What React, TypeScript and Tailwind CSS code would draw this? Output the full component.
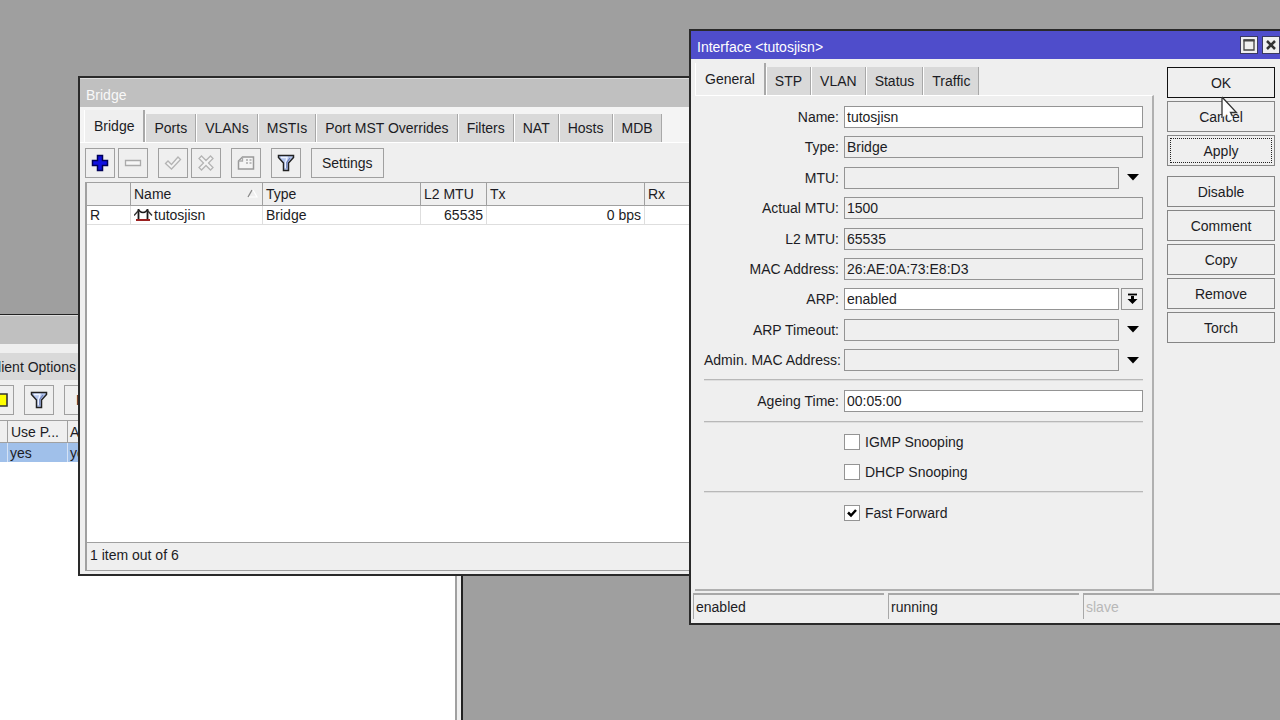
import { useState } from "react";
import type { ReactNode } from "react";

function Tab({ label, active = false }: { label: string; active?: boolean }) {
  return (
    <button
      type="button"
      role="tab"
      aria-selected={active}
      className={
        active
          ? "h-8 shrink-0 border-r-2 border-[#a8a8a8] border-l border-l-white bg-[#efefef] px-[9px] whitespace-nowrap"
          : "h-7 shrink-0 border-r border-[#a8a8a8] border-l border-l-white bg-[#d9d9d9] px-2 whitespace-nowrap"
      }
    >
      {label}
    </button>
  );
}

function Tool({ label, children }: { label: string; children: ReactNode }) {
  return (
    <button
      type="button"
      aria-label={label}
      className="flex size-[30px] shrink-0 items-center justify-center border border-[#a0a0a0] bg-[#efefef]"
    >
      {children}
    </button>
  );
}

function Funnel() {
  return (
    <svg width="18" height="18" viewBox="0 0 18 18">
      <path d="M1.5 1.5h15v2l-5 5.5v7.5h-5V9l-5-5.5z" fill="#b4c6ee" stroke="#222" strokeWidth="1.500" />
      <path d="M4 3.500h6L8.500 9v5" fill="none" stroke="#eef3ff" strokeWidth="1.400" />
      <path d="M13 4l-3.200 4.500v6" fill="none" stroke="#6d7fb8" strokeWidth="1.200" />
    </svg>
  );
}

function BridgeIcon() {
  return (
    <svg width="20" height="14" viewBox="0 0 20 14" className="shrink-0">
      <path d="M4.500 1v10M13.500 1v10" stroke="#1a1a1a" strokeWidth="1.800" />
      <path d="M4.500 2q4.500 5 9 0" fill="none" stroke="#1a1a1a" strokeWidth="1.500" />
      <path d="M0 7.500L4.500 2.500M13.500 2.500l4.500 5" fill="none" stroke="#333" strokeWidth="1.400" />
      <path d="M2 12h14" stroke="#9a2020" strokeWidth="2" />
    </svg>
  );
}

function DropArrow() {
  return (
    <svg width="12" height="7" viewBox="0 0 12 7">
      <path d="M0 0h12L6 6.500z" fill="#000" />
    </svg>
  );
}

function Field({
  id,
  label,
  value = "",
  editable = false,
  expandable = false,
}: {
  id: string;
  label: string;
  value?: string;
  editable?: boolean;
  expandable?: boolean;
}) {
  return (
    <div className="flex items-center">
      <label htmlFor={id} className="mr-[5px] w-[135px] shrink-0 text-right whitespace-nowrap">
        {label}
      </label>
      <input
        id={id}
        defaultValue={value}
        readOnly={!editable}
        className={
          editable
            ? "h-[22px] min-w-0 flex-1 border border-[#949494] bg-white px-[2px] outline-none"
            : "h-[22px] min-w-0 flex-1 border border-[#949494] bg-[#efefef] px-[2px] outline-none"
        }
      />
      {expandable && (
        <button type="button" aria-label={`Expand ${label}`} className="flex w-6 shrink-0 justify-center pl-1">
          <DropArrow />
        </button>
      )}
    </div>
  );
}

function Check({ id, label, initial = false }: { id: string; label: string; initial?: boolean }) {
  const [on, setOn] = useState(initial);
  return (
    <div className="flex h-[22px] items-center pl-[140px]">
      <span className="relative flex size-4">
        <input
          id={id}
          type="checkbox"
          checked={on}
          onChange={(e) => setOn(e.target.checked)}
          className="size-4 appearance-none border border-[#949494] bg-white"
        />
        {on && (
          <svg className="pointer-events-none absolute inset-0" width="16" height="16" viewBox="0 0 16 16">
            <path d="M4 7.500l3 3L12 5" fill="none" stroke="#000" strokeWidth="2.500" />
          </svg>
        )}
      </span>
      <label htmlFor={id} className="pl-[5px]">
        {label}
      </label>
    </div>
  );
}

function Rule() {
  return <hr className="h-[2px] border-t border-b border-t-[#b8b8b8] border-b-[#dedede]" />;
}

function Action({ label, look = "plain" }: { label: string; look?: "plain" | "default" | "focused" }) {
  return (
    <button
      type="button"
      className={
        look === "default"
          ? "flex h-[31px] items-stretch border border-[#111] bg-[#efefef] p-[2px]"
          : "flex h-[31px] items-stretch border border-[#858585] bg-[#efefef] p-[2px]"
      }
    >
      <span
        className={
          look === "focused"
            ? "flex flex-1 items-center justify-center border border-dotted border-[#222]"
            : "flex flex-1 items-center justify-center"
        }
      >
        {label}
      </span>
    </button>
  );
}

function ClientWindow() {
  return (
    <section className="absolute top-[314px] -bottom-2 -left-5 flex w-[483px] flex-col border-t border-r-2 border-[#222] bg-[#efefef]">
      <header className="h-[29px] shrink-0 border-t border-[#ddd] bg-[#c0c0c0]" />
      <div className="flex h-9 shrink-0 items-end">
        <button type="button" role="tab" aria-selected="false" className="h-[27px] bg-[#d9d9d9] pr-2 pl-2 whitespace-nowrap">
          Client Options
        </button>
      </div>
      <div className="flex h-10 shrink-0 items-center gap-[10px] pl-1">
        <Tool label="Comment">
          <svg width="20" height="16" viewBox="0 0 20 16">
            <path d="M1 2h17v12H1z" fill="#ff0" stroke="#333" strokeWidth="1.600" />
          </svg>
        </Tool>
        <Tool label="Filter">
          <Funnel />
        </Tool>
        <button type="button" className="h-[30px] border border-[#a0a0a0] px-[11px]">
          Release
        </button>
      </div>
      <div className="mr-1 flex-1 border-t border-r-2 border-[#a0a0a0] bg-white">
        <table className="w-full table-fixed border-separate border-spacing-0 text-left">
          <thead>
            <tr className="h-[22px] bg-[#efefef]">
              <th className="w-7 border-r border-b border-[#a0a0a0]" aria-label="Interface" />
              <th className="w-[60px] border-r border-b border-[#a0a0a0] pl-[3px] font-normal">Use P...</th>
              <th className="border-b border-[#a0a0a0] pl-[2px] font-normal">Add Default Route</th>
            </tr>
          </thead>
          <tbody>
            <tr className="h-[19px] bg-[#a0c0ea] leading-[18px]">
              <td className="border-r border-[#d5e2f5]" />
              <td className="border-r border-[#d5e2f5] pl-[2px]">yes</td>
              <td className="pl-[2px]">yes</td>
            </tr>
          </tbody>
        </table>
      </div>
    </section>
  );
}

const bridgeTabs = ["Ports", "VLANs", "MSTIs", "Port MST Overrides", "Filters", "NAT", "Hosts", "MDB"];

function BridgeWindow() {
  const head = "border-r border-b border-[#a0a0a0] px-[3px] font-normal";
  const cell = "border-r border-b border-[#dedede] px-[3px]";
  return (
    <section className="absolute top-[76px] left-[78px] flex w-[840px] flex-col border-2 border-[#2a2a2a] bg-[#efefef]">
      <header className="flex h-[29px] items-center border-t border-[#ddd] bg-[#c0c0c0] pt-1 pl-[6px] text-[#f8f8f8]">Bridge</header>
      <div role="tablist" className="flex h-9 items-end border-b border-white bg-[#f4f4f4] pl-1">
        <Tab label="Bridge" active />
        {bridgeTabs.map((t) => (
          <Tab key={t} label={t} />
        ))}
      </div>
      <div className="flex h-[39px] items-center gap-[10px] pl-[5px]">
        <div className="flex gap-[3px]">
          <Tool label="Add">
            <svg width="18" height="18" viewBox="0 0 18 18">
              <path d="M6.500 1.500h5v5h5v5h-5v5h-5v-5h-5v-5h5z" fill="#1010e0" stroke="#000058" strokeWidth="1.500" />
            </svg>
          </Tool>
          <Tool label="Remove">
            <svg width="18" height="18" viewBox="0 0 18 18">
              <path d="M1.500 6.500h15v5h-15z" fill="#f6f6f6" stroke="#aaa" strokeWidth="1.300" />
            </svg>
          </Tool>
        </div>
        <div className="flex gap-[3px]">
          <Tool label="Enable">
            <svg width="18" height="18" viewBox="0 0 18 18">
              <path d="M1.500 9.500l2.500-2.500 3.500 3.500L14 3l2.500 2.500-9 9.500z" fill="#f4f4f4" stroke="#b4b4b4" strokeWidth="1.300" />
            </svg>
          </Tool>
          <Tool label="Disable">
            <svg width="18" height="18" viewBox="0 0 18 18">
              <path
                d="M4.500 2L9 6.500 13.500 2 16 4.500 11.500 9l4.500 4.500-2.500 2.500L9 11.500 4.500 16 2 13.500 6.500 9 2 4.500z"
                fill="#f4f4f4"
                stroke="#b4b4b4"
                strokeWidth="1.300"
              />
            </svg>
          </Tool>
        </div>
        <Tool label="Comment">
          <svg width="18" height="16" viewBox="0 0 18 16">
            <path d="M5.500 2h11v12h-15V6z" fill="#f4f4f4" stroke="#999" strokeWidth="1.500" />
            <path d="M5.500 2v4h-4M9 5h2M12.500 5h2M9 8h2M12.500 8h2" fill="none" stroke="#aaa" strokeWidth="1.300" />
          </svg>
        </Tool>
        <Tool label="Filter">
          <Funnel />
        </Tool>
        <button type="button" className="h-[30px] border border-[#a0a0a0] px-[10px]">
          Settings
        </button>
      </div>
      <div className="ml-[5px] min-h-[360px] border-t border-l-2 border-[#a0a0a0] bg-white">
        <table className="w-full table-fixed border-separate border-spacing-0 text-left">
          <thead>
            <tr className="h-[23px] bg-[#efefef]">
              <th className={`${head} w-11`} aria-label="Flags" />
              <th className={`${head} w-[132px]`}>
                <span className="flex items-center justify-between">
                  Name
                  <svg width="12" height="10" viewBox="0 0 12 10">
                    <path d="M1 8L5 1" stroke="#888" strokeWidth="1.300" />
                    <path d="M6 1l4 7H2" fill="none" stroke="#fff" strokeWidth="1.200" />
                  </svg>
                </span>
              </th>
              <th className={`${head} w-[158px]`}>Type</th>
              <th className={`${head} w-[66px] whitespace-nowrap`}>L2 MTU</th>
              <th className={`${head} w-[158px]`}>Tx</th>
              <th className={head}>Rx</th>
            </tr>
          </thead>
          <tbody>
            <tr className="h-[19px] leading-[18px]">
              <td className={cell}>R</td>
              <td className={cell}>
                <span className="flex items-center">
                  <BridgeIcon />
                  tutosjisn
                </span>
              </td>
              <td className={cell}>Bridge</td>
              <td className={`${cell} text-right`}>65535</td>
              <td className={`${cell} text-right`}>0 bps</td>
              <td className={cell} />
            </tr>
          </tbody>
        </table>
      </div>
      <footer className="mb-[3px] ml-[5px] h-[29px] border-t border-b border-l-2 border-[#a0a0a0] pt-[2px] pl-[3px]">1 item out of 6</footer>
    </section>
  );
}

function InterfaceWindow() {
  return (
    <section className="absolute top-[29px] left-[689px] flex w-[597px] flex-col border-2 border-[#2a2a2a] bg-[#efefef] pb-1">
      <header className="flex h-7 items-center gap-1 bg-[#4f4dcb] pt-1 pr-1 pl-[6px] text-white">
        <h1 className="flex-1">Interface &lt;tutosjisn&gt;</h1>
        <button type="button" aria-label="Maximize" className="mb-1 flex size-[18px] items-center justify-center border border-[#3a3a60] bg-[#efefef]">
          <svg width="12" height="12" viewBox="0 0 12 12">
            <path d="M1 1h10v10H1z" fill="none" stroke="#444" strokeWidth="1.300" />
            <path d="M0.500 1.500h11" stroke="#444" strokeWidth="2" />
          </svg>
        </button>
        <button type="button" aria-label="Close" className="mb-1 flex size-[18px] items-center justify-center border border-[#3a3a60] bg-[#efefef]">
          <svg width="12" height="12" viewBox="0 0 12 12">
            <path d="M2 2l8 8M10 2l-8 8" stroke="#333" strokeWidth="2.500" />
          </svg>
        </button>
      </header>
      <div className="flex items-start gap-[13px] pr-[9px] pl-1">
        <div className="min-w-0 flex-1">
          <div role="tablist" className="flex h-9 items-end">
            <Tab label="General" active />
            {["STP", "VLAN", "Status", "Traffic"].map((t) => (
              <Tab key={t} label={t} />
            ))}
          </div>
          <form
            className="min-h-[496px] border-t border-r-2 border-b-2 border-t-white border-r-[#b0b0b0] border-b-[#b0b0b0] px-[9px] pt-[10px]"
            onSubmit={(e) => e.preventDefault()}
          >
            <div className="flex min-h-[265px] flex-col justify-between">
              <Field id="name" label="Name:" value="tutosjisn" editable />
              <Field id="type" label="Type:" value="Bridge" />
              <Field id="mtu" label="MTU:" expandable />
              <Field id="actual-mtu" label="Actual MTU:" value="1500" />
              <Field id="l2-mtu" label="L2 MTU:" value="65535" />
              <Field id="mac" label="MAC Address:" value="26:AE:0A:73:E8:D3" />
              <div className="flex items-center">
                <label htmlFor="arp" className="mr-[5px] w-[135px] shrink-0 text-right">
                  ARP:
                </label>
                <select
                  id="arp"
                  defaultValue="enabled"
                  className="h-[22px] min-w-0 flex-1 appearance-none border border-[#949494] bg-white px-[2px] outline-none"
                >
                  <option>enabled</option>
                  <option>disabled</option>
                </select>
                <button type="button" aria-label="Choose ARP" className="ml-[2px] flex h-[22px] w-[22px] shrink-0 items-center justify-center border border-[#949494]">
                  <svg width="11" height="12" viewBox="0 0 11 12">
                    <path d="M1 1.500h9" stroke="#000" strokeWidth="1.800" />
                    <path d="M4 3h3v3h3.500L5.500 11 0.500 6H4z" fill="#000" />
                  </svg>
                </button>
              </div>
              <Field id="arp-timeout" label="ARP Timeout:" expandable />
              <Field id="admin-mac" label="Admin. MAC Address:" expandable />
            </div>
            <div className="mt-2 flex flex-col gap-[9px]">
              <Rule />
              <Field id="ageing" label="Ageing Time:" value="00:05:00" editable />
              <Rule />
            </div>
            <div className="my-2 flex flex-col gap-2">
              <Check id="igmp" label="IGMP Snooping" />
              <Check id="dhcp" label="DHCP Snooping" />
            </div>
            <Rule />
            <div className="mt-[9px]">
              <Check id="fast" label="Fast Forward" initial />
            </div>
          </form>
        </div>
        <div className="flex w-[108px] shrink-0 flex-col gap-[10px] pt-2">
          <div className="flex flex-col gap-[3px]">
            <Action label="OK" look="default" />
            <Action label="Cancel" />
            <Action label="Apply" look="focused" />
          </div>
          <div className="flex flex-col gap-[3px]">
            {["Disable", "Comment", "Copy", "Remove", "Torch"].map((a) => (
              <Action key={a} label={a} />
            ))}
          </div>
        </div>
      </div>
      <footer className="mt-[2px] flex gap-1 pl-[2px]">
        <div className="h-[26px] w-[191px] border-t-2 border-l border-[#a8a8a8] pt-[2px] pl-[2px]">enabled</div>
        <div className="h-[26px] w-[191px] border-t-2 border-l border-[#a8a8a8] pt-[2px] pl-[2px]">running</div>
        <div className="h-[26px] flex-1 border-t-2 border-l border-[#a8a8a8] pt-[2px] pl-[2px] text-[#b8b8b8]">slave</div>
      </footer>
    </section>
  );
}

export default function App() {
  return (
    <main className="relative h-screen overflow-hidden bg-[#9f9f9f] font-['Liberation_Sans',Arial,sans-serif] text-[14px] leading-5 text-[#1c1c24]">
      <ClientWindow />
      <BridgeWindow />
      <InterfaceWindow />
      <svg className="pointer-events-none absolute top-[96px] left-[1221px]" width="18" height="27" viewBox="0 0 18 27">
        <path d="M1 1v21l4.500-4.500 3.500 7 3-1.500-3.500-6.500h7z" fill="#fff" />
        <path d="M1 1v21M1 1l14.500 15.500h-6l2 3.500" fill="none" stroke="#333" strokeWidth="1.300" />
      </svg>
    </main>
  );
}
